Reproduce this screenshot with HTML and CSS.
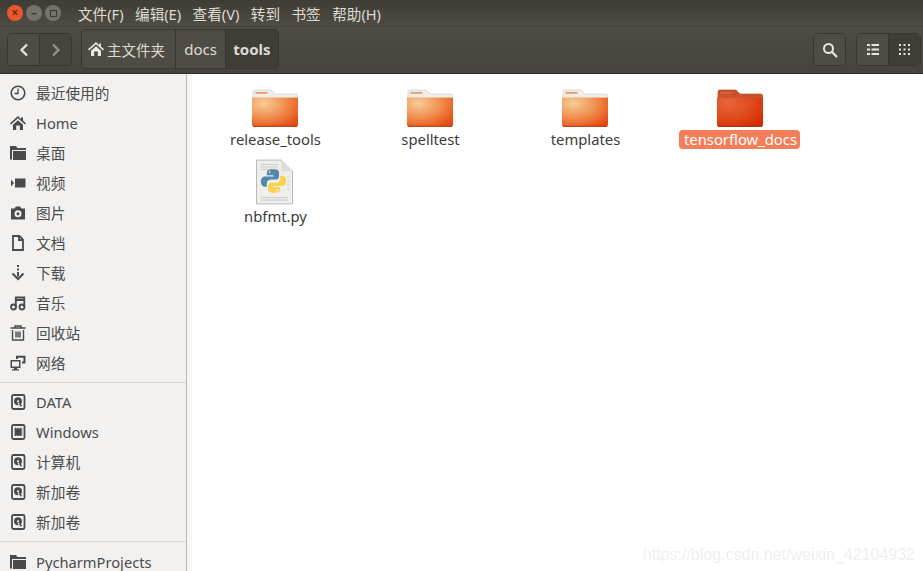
FILE: index.html
```html
<!DOCTYPE html>
<html lang="en">
<head>
    <meta charset="UTF-8">
    <meta name="viewport" content="width=device-width, initial-scale=1.0">
    <title>tools</title>
    <link rel="stylesheet" href="styles.css">
</head>
<body>
    <svg class="defs" width="0" height="0">
        <symbol id="i-home" viewBox="0 0 16 16"><path d="M8 1 0 8.300l1 1.200 7-6.300 7 6.300 1-1.200-3-2.700V2.500h-2v1.600z M3 9.700 8 5.200l5 4.500V15H9.800V10.500H6.200V15H3z" fill="currentColor"/></symbol>
        <symbol id="i-folder" viewBox="0 0 16 16"><path d="M0 1h6l1.500 2H16v2H2v9.500H0z M3 6h13v9H3z" fill="currentColor"/></symbol>
        <symbol id="i-disk" viewBox="0 0 16 16"><rect x="2" y="1" width="12.500" height="14" rx="1.500" fill="none" stroke="currentColor" stroke-width="1.800"/><circle cx="8" cy="7.300" r="4" fill="currentColor"/><circle cx="8" cy="7.300" r="1.100" fill="#f2f1ef"/><path d="M8.200 8.800l1.400 2.200" stroke="#f2f1ef" stroke-width="1.400"/><path d="M9.500 9.500l2 2.800" stroke="currentColor" stroke-width="1.500"/></symbol>
        <symbol id="i-chip" viewBox="0 0 16 16"><rect x="2" y="1" width="12.500" height="14" rx="1.500" fill="none" stroke="currentColor" stroke-width="1.800"/><path d="M5 4.500h6.500v7H5z" fill="currentColor"/><path d="M4 5h8.500M4 7h8.500M4 9h8.500M4 11h8.500M5.500 3.500v9M8.200 3.500v9M11 3.500v9" stroke="currentColor" stroke-width=".9" stroke-dasharray="1 .5"/></symbol>
        <symbol id="i-folder-art" viewBox="0 0 46 38">
            <path d="M1 12V2.500Q1 1 2.500 1H19l4 4h21q1.500 0 1.500 1.500V12z" fill="#efeeea" stroke="#c9c6c0" stroke-width=".6"/>
            <rect x="3.500" y="3" width="12" height="1.800" fill="#ee9a6b"/>
            <path d="M0 8.500H46V36q0 1.800-1.800 1.800H1.800Q0 37.800 0 36z" fill="url(#fold)"/>
            <path d="M0 8.500H46V9H0z" fill="#f7c9a0"/>
            <path d="M1 37.300H45" stroke="#a83a10" stroke-width="1"/>
        </symbol>
        <symbol id="i-folder-sel" viewBox="0 0 46 38">
            <path d="M1 12V2.500Q1 1 2.500 1H19l4 4h21q1.500 0 1.500 1.500V12z" fill="#c9532a" stroke="#b2431c" stroke-width=".6"/>
            <rect x="3.500" y="3" width="12" height="1.800" fill="#d8643a"/>
            <path d="M0 8.500H46V36q0 1.800-1.800 1.800H1.800Q0 37.800 0 36z" fill="url(#foldsel)"/>
            <path d="M1 37.300H45" stroke="#a02a08" stroke-width="1"/>
        </symbol>
        <defs>
            <radialGradient id="fold" cx=".25" cy=".2" r=".95">
                <stop offset="0" stop-color="#f6cd97"/>
                <stop offset=".55" stop-color="#ef8a4a"/>
                <stop offset="1" stop-color="#e64a12"/>
            </radialGradient>
            <radialGradient id="foldsel" cx=".25" cy=".2" r=".95">
                <stop offset="0" stop-color="#e8653a"/>
                <stop offset=".55" stop-color="#de4a1c"/>
                <stop offset="1" stop-color="#d42a02"/>
            </radialGradient>
        </defs>
    </svg>

    <header class="menubar">
        <div class="win-btns">
            <span class="win-btn close">×</span>
            <span class="win-btn">–</span>
            <span class="win-btn"><i class="max-mark"></i></span>
        </div>
        <nav class="menu">
            <span>文件(F)</span>
            <span>编辑(E)</span>
            <span>查看(V)</span>
            <span>转到</span>
            <span>书签</span>
            <span>帮助(H)</span>
        </nav>
    </header>

    <div class="toolbar">
        <div class="btn-group nav-btns">
            <button class="tool-btn nav-btn"><svg width="12" height="14" viewBox="0 0 12 14"><path d="M9 1.500 3.500 7 9 12.500" fill="none" stroke="#e8e6e1" stroke-width="2.200"/></svg></button>
            <button class="tool-btn nav-btn dim"><svg width="12" height="14" viewBox="0 0 12 14"><path d="M3 1.500 8.500 7 3 12.500" fill="none" stroke="#96938c" stroke-width="2.200"/></svg></button>
        </div>
        <div class="btn-group path">
            <button class="tool-btn crumb home"><svg class="crumb-icon" width="16" height="16"><use href="#i-home"/></svg>主文件夹</button>
            <button class="tool-btn crumb docs">docs</button>
            <button class="tool-btn crumb current">tools</button>
        </div>
        <div class="spacer"></div>
        <div class="btn-group search">
            <button class="tool-btn square"><svg width="16" height="16" viewBox="0 0 16 16"><circle cx="6.500" cy="6.500" r="4.500" fill="none" stroke="#e8e6e1" stroke-width="2"/><path d="M10 10l5 5" stroke="#e8e6e1" stroke-width="2.200"/></svg></button>
        </div>
        <div class="btn-group views">
            <button class="tool-btn square"><svg width="12" height="11" viewBox="0 0 12 11" fill="#e8e6e1"><path d="M0 0h3v2H0zM4.500 0H12v2H4.500zM0 4.500h3v2H0zM4.500 4.500H12v2H4.500zM0 9h3v2H0zM4.500 9H12v2H4.500z"/></svg></button>
            <button class="tool-btn square current"><svg width="11" height="11" viewBox="0 0 11 11" fill="#e8e6e1"><path d="M0 0h2v2H0zM4.500 0h2v2h-2zM9 0h2v2H9zM0 4.500h2v2H0zM4.500 4.500h2v2h-2zM9 4.500h2v2H9zM0 9h2v2H0zM4.500 9h2v2h-2zM9 9h2v2H9z"/></svg></button>
        </div>
    </div>

    <div class="content">
        <aside class="sidebar">
            <ul class="places">
                <li><svg class="side-icon" viewBox="0 0 16 16"><circle cx="8" cy="8" r="6.800" fill="none" stroke="currentColor" stroke-width="1.600"/><path d="M8 3.500V8.500H4.500" fill="none" stroke="currentColor" stroke-width="1.300"/></svg>最近使用的</li>
                <li><svg class="side-icon"><use href="#i-home"/></svg>Home</li>
                <li><svg class="side-icon"><use href="#i-folder"/></svg>桌面</li>
                <li><svg class="side-icon" viewBox="0 0 16 16"><path d="M5 3.500h10.500v9H5zM1 4.500l3 3.500-3 3.500z" fill="currentColor"/></svg>视频</li>
                <li><svg class="side-icon" viewBox="0 0 16 16"><path fill-rule="evenodd" d="M1 3.500h3.500L6 1.500h4l1.500 2H15v11H1zM8 5.300a3.500 3.500 0 1 0 0 7 3.500 3.500 0 0 0 0-7zM8 7.300a1.500 1.500 0 1 1 0 3 1.500 1.500 0 0 1 0-3z" fill="currentColor"/></svg>图片</li>
                <li><svg class="side-icon" viewBox="0 0 16 16"><path d="M3 1h6.500L13 4.500V15H3z M9 1.500V5h4" fill="none" stroke="currentColor" stroke-width="1.800"/></svg>文档</li>
                <li><svg class="side-icon" viewBox="0 0 16 16"><path d="M7 0h2v2H7zM7 3.500h2v2H7zM7 7h2v4.500H7z" fill="currentColor"/><path d="M2.500 8.500 8 14l5.500-5.500" fill="none" stroke="currentColor" stroke-width="2"/></svg>下载</li>
                <li><svg class="side-icon" viewBox="0 0 16 16"><path d="M5.800 12V2.500h8.500V12M5.800 5h8.500" fill="none" stroke="currentColor" stroke-width="1.800"/><circle cx="3.500" cy="12" r="2.500" fill="none" stroke="currentColor" stroke-width="1.800"/><circle cx="12" cy="12" r="2.500" fill="none" stroke="currentColor" stroke-width="1.800"/></svg>音乐</li>
                <li><svg class="side-icon" viewBox="0 0 16 16"><path d="M0.500 3h15M5 3V1h6v2M2.500 5v10h11V5M6 6.500v6M8 6.500v6M10 6.500v6" fill="none" stroke="currentColor" stroke-width="1.400"/></svg>回收站</li>
                <li><svg class="side-icon" viewBox="0 0 16 16"><path fill-rule="evenodd" d="M0.500 5h10v8H7v1.300h2V15.500H2v-1.200h2V13H0.500zM2 6.500v5h7v-5z" fill="currentColor"/><path d="M6 3V0.800h9.500V8.500H12V6.500h1.500V2.700H8V4H6z" fill="currentColor"/></svg>网络</li>
            </ul>
            <ul class="places">
                <li><svg class="side-icon"><use href="#i-disk"/></svg>DATA</li>
                <li><svg class="side-icon"><use href="#i-chip"/></svg>Windows</li>
                <li><svg class="side-icon"><use href="#i-disk"/></svg>计算机</li>
                <li><svg class="side-icon"><use href="#i-disk"/></svg>新加卷</li>
                <li><svg class="side-icon"><use href="#i-disk"/></svg>新加卷</li>
            </ul>
            <ul class="places">
                <li><svg class="side-icon"><use href="#i-folder"/></svg>PycharmProjects</li>
            </ul>
        </aside>
        <div class="sidebar-gap"></div>
        <main class="files">
            <div class="file"><svg class="file-icon" width="46" height="38"><use href="#i-folder-art"/></svg><span class="file-name">release_tools</span></div>
            <div class="file"><svg class="file-icon" width="46" height="38"><use href="#i-folder-art"/></svg><span class="file-name">spelltest</span></div>
            <div class="file"><svg class="file-icon" width="46" height="38"><use href="#i-folder-art"/></svg><span class="file-name">templates</span></div>
            <div class="file selected"><svg class="file-icon" width="46" height="38"><use href="#i-folder-sel"/></svg><span class="file-name">tensorflow_docs</span></div>
            <div class="file script">
                <svg class="file-icon" width="37" height="46" viewBox="0 0 38 46">
                    <path d="M0.500 0.500H26L37.500 12V45.500H0.500z" fill="#eeeeec" stroke="#b9b9b5"/>
                    <path d="M26 0.500V12H37.500z" fill="#dcdcd8"/>
                    <path d="M5 5h18M5 7.500h18M5 10h18M5 39h28M5 41.500h28M32 18h2M32 22h2M32 26h2M32 30h2" stroke="#c9c9c5" stroke-width="1"/>
                    <g transform="translate(2.600 3.500) scale(.81)">
                        <path d="M18.500 8c-5 0-8 1.300-8 4v3.500h8.500V17H8c-3.500 0-5 3-5 6.500S4.500 30 7.500 30h3v-4c0-3 2.500-5 5.500-5h6c2.500 0 4-1.800 4-4v-5c0-2.700-3-4-7.500-4z" fill="#5587ad"/>
                        <circle cx="14" cy="11.500" r="1.200" fill="#eeeeec"/>
                        <path d="M19.500 38c5 0 8-1.300 8-4v-3.500H19V29h11c3.500 0 5-3 5-6.500S33.500 16 30.500 16h-3v4c0 3-2.500 5-5.500 5h-6c-2.500 0-4 1.800-4 4v5c0 2.700 3 4 7.500 4z" fill="#f6d452"/>
                        <circle cx="24" cy="34.500" r="1.200" fill="#eeeeec"/>
                    </g>
                </svg>
                <span class="file-name">nbfmt.py</span>
            </div>
        </main>
    </div>
    <div class="watermark">https://blog.csdn.net/weixin_42104932</div>
</body>
</html>
```
FILE: styles.css
```css
* {
    box-sizing: border-box;
}
html, body {
    height: 100%;
}
body {
    margin: 0;
    overflow: hidden;
    font-family: "Noto Sans", "Noto Sans CJK SC", sans-serif;
    font-size: 15px;
    color: #3d3d3d;
    background: #fff;
    display: flex;
    flex-direction: column;
}
.defs {
    position: absolute;
}

/* menu bar */
.menubar {
    height: 26px;
    display: flex;
    align-items: center;
    padding-left: 7px;
    background: linear-gradient(#3f3c37, #4f4c45);
    color: #dfdbd2;
    flex: none;
}
.win-btns {
    display: flex;
    gap: 3px;
    width: 71px;
}
.win-btn {
    width: 16px;
    height: 16px;
    border-radius: 50%;
    background: #75726a;
    color: #3a3833;
    font-size: 12px;
    line-height: 14px;
    text-align: center;
    font-weight: bold;
    display: flex;
    align-items: center;
    justify-content: center;
}
.win-btn.close {
    background: #e9572a;
    color: #6d2a12;
}
.max-mark {
    width: 7px;
    height: 7px;
    border: 1px solid #3a3833;
}
.menu {
    display: flex;
    gap: 11.5px;
    font-size: 14.6px;
}

/* tool bar */
.toolbar {
    height: 48px;
    flex: none;
    display: flex;
    align-items: flex-start;
    padding: 2px 2px 0 7px;
    background: linear-gradient(#4f4c45, #46433d);
    border-top: 1px solid #45423c;
    border-bottom: 1px solid #2f2d29;
}
.btn-group {
    display: flex;
    height: 33px;
    margin-top: 4px;
    border: 1px solid #383632;
    border-radius: 5px;
    overflow: hidden;
}
.tool-btn {
    height: 100%;
    padding: 0;
    border: none;
    border-right: 1px solid #383632;
    background: #4f4c46;
    color: #dfdbd2;
    font: inherit;
    display: flex;
    align-items: center;
    justify-content: center;
}
.tool-btn:last-child {
    border-right: none;
}
.tool-btn.current {
    background: #3f3d38;
}
.nav-btns {
    width: 65px;
    margin-right: 9px;
}
.nav-btn {
    width: 32px;
}
.nav-btn.dim {
    background: #47443f;
    flex: 1;
}
.path {
    height: 40px;
    margin-top: 0;
}
.crumb.home {
    width: 94px;
    gap: 3px;
    justify-content: flex-start;
    padding-left: 6px;
    font-size: 14.5px;
}
.crumb.docs {
    width: 50px;
}
.crumb.current {
    font-weight: bold;
    width: 52px;
}
.crumb-icon {
    color: #e8e6e1;
}
.spacer {
    flex: 1;
}
.square {
    width: 32px;
}
.views .current {
    width: 31px;
}
.search .square {
    width: 31px;
}
.search {
    margin-right: 10px;
}

/* body of the window */
.content {
    flex: 1;
    display: flex;
    min-height: 0;
}
.sidebar {
    width: 187px;
    flex: none;
    background: #f2f1ef;
    border-right: 1px solid #b9b7b2;
    overflow: hidden;
    padding-top: 4px;
    font-size: 14.7px;
}
.sidebar-gap {
    width: 5px;
    flex: none;
    background: #f6f5f4;
}
.places {
    list-style: none;
    margin: 0 0 4px;
    padding: 0 0 4px;
    border-bottom: 1px solid #d9d8d5;
}
.places:nth-child(2) {
    margin-bottom: 5px;
}
.places li {
    height: 30px;
    display: flex;
    align-items: center;
    gap: 10px;
    padding-left: 10px;
    color: #4c4c4c;
    white-space: nowrap;
    padding-bottom: 1px;
}
.side-icon {
    width: 16px;
    height: 16px;
    color: #4a4a4a;
    flex: none;
}

/* icon grid */
.files {
    flex: 1;
    display: grid;
    grid-template-columns: repeat(4, 155px);
    grid-auto-rows: 70px;
    padding: 15px 0 0 5px;
    align-content: start;
    font-size: 14.8px;
}
.file {
    display: flex;
    flex-direction: column;
    align-items: center;
    color: #3c3c3c;
}
.file-icon {
    flex: none;
}
.file-name {
    margin-top: 3px;
    padding: 0 3px 0 5px;
    line-height: 19px;
    white-space: nowrap;
    border-radius: 4px;
}
.script .file-name {
    margin-top: 2px;
}
.selected .file-name {
    background: #f37e59;
    color: #fff;
}

.watermark {
    position: absolute;
    right: 8px;
    bottom: 7px;
    font-family: "Liberation Sans", sans-serif;
    font-size: 16px;
    color: #efefef;
}
```
